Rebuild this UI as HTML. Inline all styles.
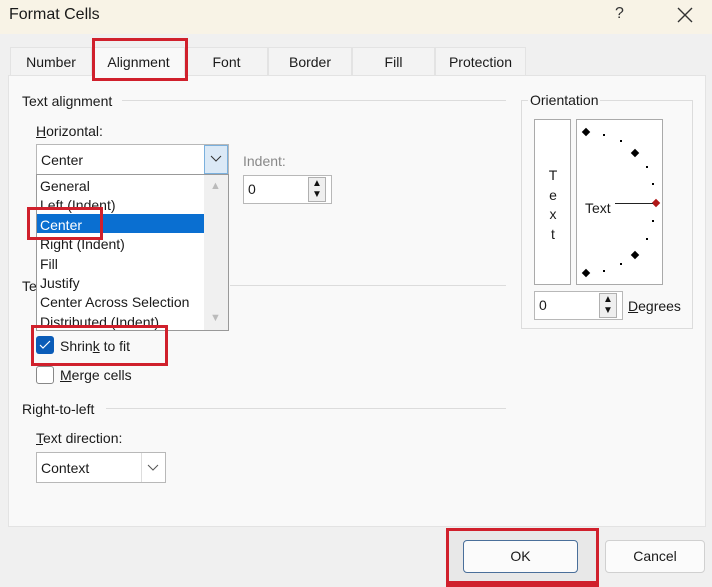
<!DOCTYPE html>
<html><head><style>
*{margin:0;padding:0;box-sizing:border-box}
body{width:712px;height:587px;position:relative;background:#f0f0f0;font-family:"Liberation Sans",sans-serif;font-size:14px;color:#1a1a1a;overflow:hidden}
.a{position:absolute}
.tab{position:absolute;top:47px;height:28px;border:1px solid #e3e3e3;border-bottom:none;background:#f3f3f3;text-align:center;line-height:29px;font-size:14px}
.line{position:absolute;height:1px;background:#dcdcdc}
.red{position:absolute;border:3px solid #d0202c}
.box{position:absolute;background:#fff;border:1px solid #b8b8b8}
.spin{position:absolute;width:18px;background:#efefef;border:1px solid #b0b0b0}
.dot{position:absolute;width:2px;height:2px;background:#000}
.dia{position:absolute;width:6px;height:6px;background:#000;transform:rotate(45deg)}
.ar{position:absolute;font-size:10px;line-height:10px;color:#111}
</style></head><body>
<div class="a" style="left:0;top:0;width:712px;height:34px;background:#f8f3e6"></div>
<div class="a" style="left:9px;top:6px;font-size:16px">Format Cells</div>
<div class="a" style="left:615px;top:5px;font-size:16px;color:#333">?</div>
<svg class="a" style="left:676px;top:6px" width="18" height="18"><path d="M2 2L16 16M16 2L2 16" stroke="#333" stroke-width="1.4"/></svg>

<div class="a" style="left:8px;top:75px;width:698px;height:452px;background:#f9f9f9;border:1px solid #e3e3e3"></div>
<div class="tab" style="left:10px;width:82px">Number</div>
<div class="tab" style="left:92px;width:93px;background:#f9f9f9;height:29px">Alignment</div>
<div class="tab" style="left:185px;width:83px">Font</div>
<div class="tab" style="left:268px;width:84px">Border</div>
<div class="tab" style="left:352px;width:83px">Fill</div>
<div class="tab" style="left:435px;width:91px">Protection</div>
<div class="red" style="left:92px;top:38px;width:96px;height:43px"></div>

<div class="a" style="left:22px;top:93px">Text alignment</div>
<div class="line" style="left:122px;top:100px;width:384px"></div>
<div class="a" style="left:36px;top:123px"><u>H</u>orizontal:</div>
<div class="box" style="left:36px;top:144px;width:193px;height:31px"></div>
<div class="a" style="left:41px;top:152px">Center</div>
<div class="a" style="left:204px;top:145px;width:24px;height:29px;background:#dbe9f6;border:1px solid #7ab0dd"></div>
<svg class="a" style="left:209px;top:155px" width="14" height="8"><path d="M2 1L7 6L12 1" stroke="#333" fill="none"/></svg>
<div class="a" style="left:243px;top:153px;color:#888">Indent:</div>
<div class="box" style="left:243px;top:175px;width:89px;height:29px"></div>
<div class="a" style="left:248px;top:181px">0</div>
<div class="spin" style="left:308px;top:177px;height:25px"></div>
<div class="ar" style="left:312px;top:179px">▲</div>
<div class="ar" style="left:312px;top:190px">▼</div>

<div class="a" style="left:22px;top:278px">Te</div>
<div class="line" style="left:230px;top:285px;width:276px"></div>

<div class="box" style="left:36px;top:174px;width:193px;height:157px;border-color:#999"></div>
<div class="a" style="left:204px;top:175px;width:24px;height:155px;background:#f0f0f0"></div>
<div class="a" style="left:210px;top:180px;font-size:11px;color:#bbb">▲</div>
<div class="a" style="left:210px;top:312px;font-size:11px;color:#bbb">▼</div>
<div class="a" style="left:37px;top:214px;width:167px;height:19px;background:#0a6fd1"></div>
<div class="a" style="left:40px;top:177px;line-height:19.4px">General<br>Left (Indent)<br><span style="color:#fff">Center</span><br>Right (Indent)<br>Fill<br>Justify<br>Center Across Selection<br>Distributed (Indent)</div>
<div class="red" style="left:27px;top:207px;width:76px;height:33px"></div>

<div class="a" style="left:36px;top:336px;width:18px;height:18px;background:#0a5cb8;border-radius:3px"></div>
<svg class="a" style="left:39px;top:340px" width="12" height="10"><path d="M1 5L4 8L11 1" stroke="#fff" fill="none" stroke-width="1.2"/></svg>
<div class="a" style="left:60px;top:338px">Shrin<u>k</u> to fit</div>
<div class="red" style="left:31px;top:325px;width:137px;height:41px"></div>
<div class="a" style="left:36px;top:366px;width:18px;height:18px;background:#fff;border:1px solid #888;border-radius:3px"></div>
<div class="a" style="left:60px;top:367px"><u>M</u>erge cells</div>

<div class="a" style="left:22px;top:401px">Right-to-left</div>
<div class="line" style="left:106px;top:408px;width:400px"></div>
<div class="a" style="left:36px;top:430px"><u>T</u>ext direction:</div>
<div class="box" style="left:36px;top:452px;width:130px;height:31px"></div>
<div class="a" style="left:41px;top:460px">Context</div>
<div class="a" style="left:141px;top:453px;width:24px;height:29px;background:#fff;border-left:1px solid #ddd"></div>
<svg class="a" style="left:146px;top:464px" width="14" height="8"><path d="M2 1L7 6L12 1" stroke="#555" fill="none"/></svg>

<div class="a" style="left:521px;top:100px;width:172px;height:229px;border:1px solid #dcdcdc"></div>
<div class="a" style="left:528px;top:92px;background:#f9f9f9;padding:0 2px">Orientation</div>
<div class="a" style="left:534px;top:119px;width:37px;height:166px;background:#fff;border:1px solid #aaa"></div>
<div class="a" style="left:548px;top:166px;line-height:19.5px;text-align:center;width:10px">T<br>e<br>x<br>t</div>
<div class="a" style="left:576px;top:119px;width:87px;height:166px;background:#fff;border:1px solid #aaa"></div>
<div class="dia" style="left:583px;top:129px"></div>
<div class="dot" style="left:603px;top:134px"></div>
<div class="dot" style="left:620px;top:140px"></div>
<div class="dia" style="left:632px;top:150px"></div>
<div class="dot" style="left:646px;top:166px"></div>
<div class="dot" style="left:652px;top:183px"></div>
<div class="dia" style="left:653px;top:200px;background:#b01818"></div>
<div class="dot" style="left:652px;top:220px"></div>
<div class="dot" style="left:646px;top:238px"></div>
<div class="dia" style="left:632px;top:252px"></div>
<div class="dot" style="left:620px;top:263px"></div>
<div class="dot" style="left:603px;top:270px"></div>
<div class="dia" style="left:583px;top:270px"></div>
<div class="a" style="left:585px;top:200px">Text</div>
<div class="a" style="left:615px;top:203px;width:38px;height:1px;background:#222"></div>
<div class="box" style="left:534px;top:291px;width:89px;height:29px"></div>
<div class="a" style="left:539px;top:297px">0</div>
<div class="spin" style="left:599px;top:293px;height:25px"></div>
<div class="ar" style="left:603px;top:295px">▲</div>
<div class="ar" style="left:603px;top:306px">▼</div>
<div class="a" style="left:628px;top:298px"><u>D</u>egrees</div>

<div class="a" style="left:446px;top:528px;width:153px;height:59px;background:#e8e8e8"></div>
<div class="red" style="left:446px;top:528px;width:153px;height:59px;border-bottom-width:6px"></div>
<div class="a" style="left:463px;top:540px;width:115px;height:33px;background:#fbfbfb;border:1px solid #4a6f9a;border-radius:4px;text-align:center;line-height:31px">OK</div>
<div class="a" style="left:605px;top:540px;width:100px;height:33px;background:#fbfbfb;border:1px solid #d0d0d0;border-radius:4px;text-align:center;line-height:31px">Cancel</div>
</body></html>
